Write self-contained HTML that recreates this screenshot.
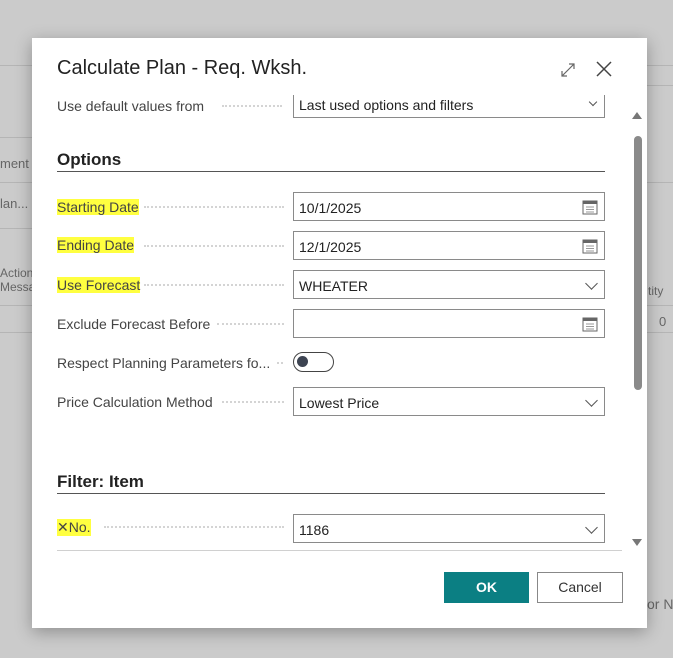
<!DOCTYPE html>
<html><head><style>
*{margin:0;padding:0;box-sizing:border-box}
body{width:673px;height:658px;background:#cbcbcb;position:relative;overflow:hidden;font-family:"Liberation Sans",sans-serif;color:#333}
.bg{position:absolute;color:#666;font-size:13px;white-space:nowrap}
.hl{position:absolute;left:0;height:1px;background:#b5b5b5}
.dlg{position:absolute;left:32px;top:38px;width:615px;height:590px;background:#fff;box-shadow:0 4px 16px rgba(0,0,0,.3)}
.a{position:absolute}
.lbl{position:absolute;left:25px;font-size:14px;color:#444;white-space:nowrap}
.dots{position:absolute;height:2px;border-bottom:2px dotted #d4d4d4}
.inp{position:absolute;left:261px;width:312px;height:29px;border:1px solid #8a8a8a;font-size:14px;color:#222;padding:7px 0 0 5px}
.y{background:#ffff40}
h2{position:absolute;left:25px;font-size:17px;font-weight:bold;color:#222}
.line{position:absolute;left:25px;width:548px;height:1px;background:#555}
.chev{position:absolute;right:8px;top:8px;width:9px;height:9px;border-right:1.3px solid #555;border-bottom:1.3px solid #555;transform:rotate(45deg)}
.cal{position:absolute;right:6px;top:6px}
</style></head><body>
<div class="hl" style="top:65px;width:40px"></div>
<div class="hl" style="top:137px;width:40px"></div>
<div class="hl" style="top:182px;width:40px"></div>
<div class="hl" style="top:228px;width:40px"></div>
<div class="hl" style="top:305px;width:40px"></div>
<div class="hl" style="top:332px;width:40px"></div>
<div class="hl" style="top:65px;left:647px;width:30px"></div>
<div class="hl" style="top:85px;left:647px;width:30px"></div>
<div class="hl" style="top:182px;left:647px;width:30px"></div>
<div class="hl" style="top:305px;left:647px;width:30px"></div>
<div class="hl" style="top:332px;left:647px;width:30px"></div>
<div class="bg" style="left:0;top:156px">ment</div>
<div class="bg" style="left:0;top:196px">lan...</div>
<div class="bg" style="left:0;top:266px;font-size:12px">Action<br>Messa</div>
<div class="bg" style="left:648px;top:284px;font-size:12px">tity</div>
<div class="bg" style="left:659px;top:314px">0</div>
<div class="bg" style="left:647px;top:596px;font-size:14px">or N</div>

<div class="dlg">
 <div class="a" style="left:25px;top:19px;font-size:20px;color:#222">Calculate Plan - Req. Wksh.</div>
 <svg class="a" style="left:527px;top:23px" width="18" height="18" viewBox="0 0 18 18" fill="none" stroke="#666" stroke-width="1.2"><path d="M3 15L15 3M10 3h5v5M3 10v5h5"/></svg>
 <svg class="a" style="left:563px;top:22px" width="18" height="18" viewBox="0 0 18 18" stroke="#444" stroke-width="1.5"><path d="M2 2L16 16M16 2L2 16"/></svg>

 <div class="a" style="left:0;top:57px;width:600px;height:24px;overflow:hidden">
  <div class="lbl" style="top:3px">Use default values from</div>
  <div class="dots" style="left:190px;top:10px;width:60px"></div>
  <div class="inp" style="top:-6px;">Last used options and filters<div class="chev" style="top:9px;width:6px;height:6px"></div></div>
 </div>

 <h2 style="top:112px">Options</h2>
 <div class="line" style="top:133px"></div>

 <div class="lbl y" style="top:161px">Starting Date</div><div class="dots" style="left:112px;top:168px;width:140px"></div>
 <div class="inp" style="top:154px">10/1/2025<svg class="cal" width="16" height="16" viewBox="0 0 16 16"><rect x="1" y="2" width="14" height="13" fill="#fff" stroke="#666"/><rect x="1" y="2" width="14" height="3" fill="#666"/><path d="M4 8h8M4 10.5h8M4 13h8" stroke="#999"/></svg></div>

 <div class="lbl y" style="top:199px">Ending Date</div><div class="dots" style="left:112px;top:207px;width:140px"></div>
 <div class="inp" style="top:193px">12/1/2025<svg class="cal" width="16" height="16" viewBox="0 0 16 16"><rect x="1" y="2" width="14" height="13" fill="#fff" stroke="#666"/><rect x="1" y="2" width="14" height="3" fill="#666"/><path d="M4 8h8M4 10.5h8M4 13h8" stroke="#999"/></svg></div>

 <div class="lbl y" style="top:239px">Use Forecast</div><div class="dots" style="left:112px;top:246px;width:140px"></div>
 <div class="inp" style="top:232px">WHEATER<div class="chev"></div></div>

 <div class="lbl" style="top:278px">Exclude Forecast Before</div><div class="dots" style="left:185px;top:285px;width:67px"></div>
 <div class="inp" style="top:271px"><svg class="cal" width="16" height="16" viewBox="0 0 16 16"><rect x="1" y="2" width="14" height="13" fill="#fff" stroke="#666"/><rect x="1" y="2" width="14" height="3" fill="#666"/><path d="M4 8h8M4 10.5h8M4 13h8" stroke="#999"/></svg></div>

 <div class="lbl" style="top:317px">Respect Planning Parameters fo...</div><div class="dots" style="left:245px;top:324px;width:6px"></div>
 <div class="a" style="left:261px;top:314px;width:41px;height:20px;border:1.5px solid #444;border-radius:10px"><div class="a" style="left:3px;top:3px;width:11px;height:11px;border-radius:50%;background:#3d4452"></div></div>

 <div class="lbl" style="top:356px">Price Calculation Method</div><div class="dots" style="left:190px;top:363px;width:62px"></div>
 <div class="inp" style="top:349px">Lowest Price<div class="chev"></div></div>

 <h2 style="top:434px">Filter: Item</h2>
 <div class="line" style="top:455px"></div>

 <div class="lbl y" style="top:481px">✕No.</div><div class="dots" style="left:72px;top:488px;width:180px"></div>
 <div class="inp" style="top:476px">1186<div class="chev"></div></div>

 <div class="a" style="left:25px;top:512px;width:565px;height:1px;background:#d0d0d0"></div>

 <div class="a" style="left:412px;top:534px;width:85px;height:31px;background:#0b7f83;color:#fff;font-weight:bold;font-size:14px;text-align:center;line-height:31px">OK</div>
 <div class="a" style="left:505px;top:534px;width:86px;height:31px;border:1px solid #888;color:#333;font-size:14px;text-align:center;line-height:29px">Cancel</div>

 <div class="a" style="left:600px;top:74px;width:0;height:0;border-left:5px solid transparent;border-right:5px solid transparent;border-bottom:7px solid #777"></div>
 <div class="a" style="left:602px;top:98px;width:8px;height:254px;background:#8a8a8a;border-radius:4px"></div>
 <div class="a" style="left:600px;top:501px;width:0;height:0;border-left:5px solid transparent;border-right:5px solid transparent;border-top:7px solid #777"></div>
</div>
</body></html>
